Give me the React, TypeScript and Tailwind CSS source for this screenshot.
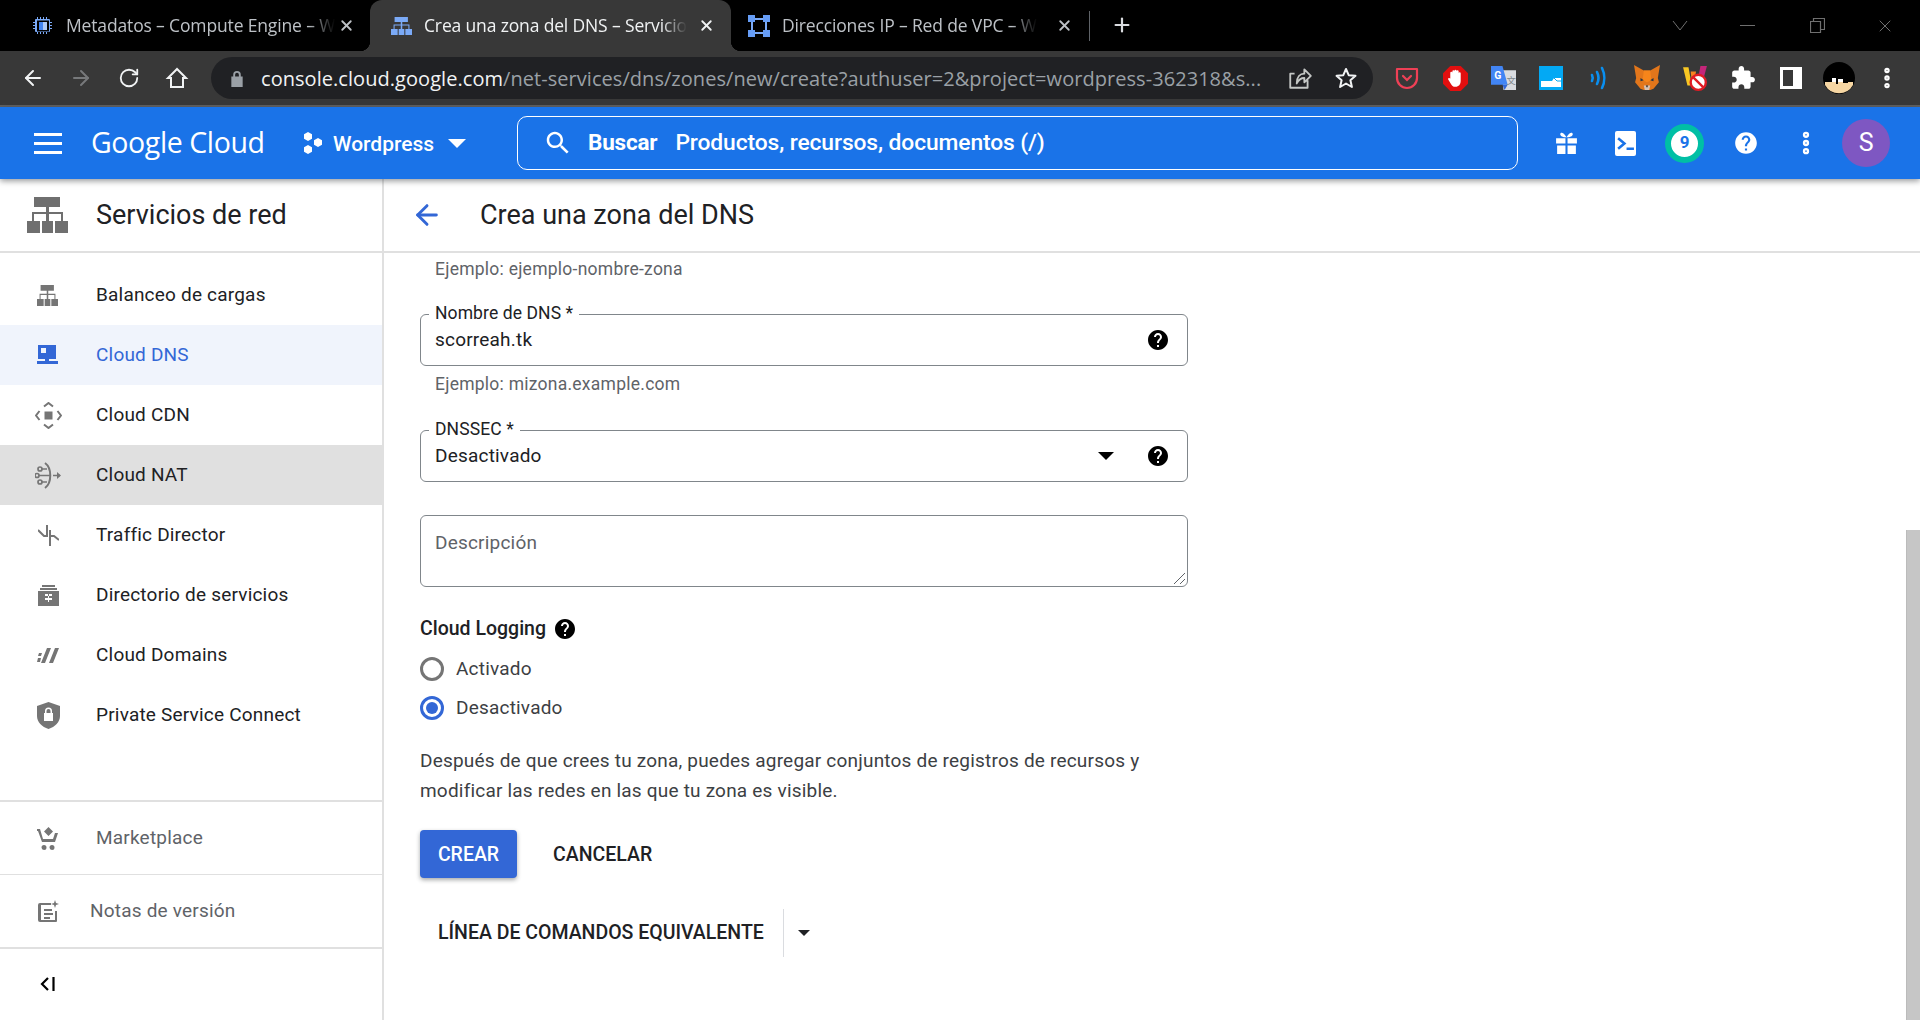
import type { ReactNode } from "react";
import { ArrowLeft, ArrowRight, Ellipsis, Plus, RotateCw, X } from "lucide-react";

const HELP_PATH =
  "M12 2C6.48 2 2 6.48 2 12s4.48 10 10 10 10-4.48 10-10S17.52 2 12 2zm1 17h-2v-2h2v2zm2.07-7.75l-.9.92C13.45 12.9 13 13.5 13 15h-2v-.5c0-1.1.45-2.1 1.17-2.83l1.24-1.26c.37-.36.59-.86.59-1.41 0-1.1-.9-2-2-2s-2 .9-2 2H8c0-2.21 1.79-4 4-4s4 1.79 4 4c0 .88-.36 1.68-.93 2.25z";

function HelpIcon({ className = "h-6 w-6 text-black" }: { className?: string }) {
  return (
    <svg viewBox="0 0 24 24" className={className} fill="currentColor">
      <path d={HELP_PATH} />
    </svg>
  );
}

function NetworkIcon({ className }: { className?: string }) {
  return (
    <svg viewBox="0 0 41 36" preserveAspectRatio="none" className={className} fill="currentColor">
      <path d="M7 0h26v10H22v5h14v9h5v12H28V24h6v-7H22v7h4v12H15V24h4v-7H7v7h6v12H0V24h5v-9h14v-5H7z" />
    </svg>
  );
}

function ChipIcon() {
  return (
    <svg viewBox="0 0 24 24" className="h-[24px] w-[24px]" fill="#7baaf7">
      <path d="M6 3h1v2h2V3h1v2h2V3h1v2h2V3h1v2h2a1 1 0 0 1 1 1v2h2v1h-2v2h2v1h-2v2h2v1h-2v2a1 1 0 0 1-1 1h-2v2h-1v-2h-2v2h-1v-2h-2v2H9v-2H7v2H6v-2H5a1 1 0 0 1-1-1v-2H2v-1h2v-2H2v-1h2V9H2V8h2V6a1 1 0 0 1 1-1h1zm0 3.500v11h12v-11z" />
      <path d="M8 8h8v8H8z" fill="#4285f4" />
      <path d="M12 8h4v8h-4z" fill="#aecbfa" />
    </svg>
  );
}

function VpcIcon() {
  return (
    <svg viewBox="0 0 22 22" className="h-[22px] w-[22px]">
      <path d="M4 4h14v14H4z" fill="none" stroke="#7baaf7" strokeWidth="2" />
      <path d="M0 0h7v7H0zM15 0h7v7h-7zM0 15h7v7H0zM15 15h7v7h-7z" fill="#669df6" />
    </svg>
  );
}

function Tab({
  icon,
  title,
  active,
  className,
  closeClass,
}: {
  icon: ReactNode;
  title: string;
  active?: boolean;
  className: string;
  closeClass: string;
}) {
  return (
    <div
      className={`relative flex h-[51px] shrink-0 items-center ${className} ${
        active ? "rounded-t-[12px] bg-[#383838] text-[#f1f3f4]" : "text-[#bdc1c6]"
      }`}
    >
      {active && (
        <>
          <span className="absolute bottom-0 -left-[10px] h-[10px] w-[10px] bg-[radial-gradient(circle_at_0_0,#000_10px,#383838_10.5px)]" />
          <span className="absolute bottom-0 -right-[10px] h-[10px] w-[10px] bg-[radial-gradient(circle_at_100%_0,#000_10px,#383838_10.5px)]" />
        </>
      )}
      <span className="flex w-[24px] justify-center">{icon}</span>
      <span className="ml-[11px] whitespace-nowrap font-['Open_Sans'] text-[17.5px] tracking-[-0.15px] [mask-image:linear-gradient(to_right,#000_90%,transparent)]">
        {title}
      </span>
      <X className={`ml-auto h-[17px] w-[17px] ${closeClass}`} strokeWidth={2.6} />
    </div>
  );
}

function TabStrip() {
  return (
    <div className="flex h-[51px] shrink-0 bg-black">
      <div className="flex pl-[14px] pr-0">
        <Tab className="w-[356px] pl-[17px]" closeClass="mr-[15px]" title="Metadatos – Compute Engine – W" icon={<ChipIcon />} />
        <Tab
          active
          className="w-[361px] pl-[19px]"
          closeClass="mr-[16px]"
          title="Crea una zona del DNS – Servicio"
          icon={<NetworkIcon className="h-[18px] w-[21px] text-[#7baaf7]" />}
        />
        <Tab className="w-[359px] pl-[16px]" closeClass="mr-[17px]" title="Direcciones IP – Red de VPC – W" icon={<VpcIcon />} />
      </div>
      <div className="ml-[-1px] mt-[11px] h-[30px] w-px bg-[#5f6368]" />
      <Plus className="ml-[21px] mt-[14px] h-[22px] w-[22px] text-[#dadce0]" strokeWidth={2.4} />
      <div className="ml-auto flex items-center text-[#6f6f6f]">
        <svg viewBox="0 0 16 10" className="mr-[52px] h-[10px] w-[16px]" fill="none" stroke="currentColor">
          <path d="M1 0l7 9 7-9" />
        </svg>
        <div className="mr-[55px] h-px w-[15px] bg-current" />
        <svg viewBox="0 0 15 15" className="mr-[50px] h-[15px] w-[15px]" fill="none" stroke="currentColor" strokeWidth="1.2">
          <path d="M.5 3.500h10v11H.5zM3.500 3.500v-3h11v11h-4" />
        </svg>
        <X className="mr-[25px] h-[20px] w-[20px]" strokeWidth={1.2} />
      </div>
    </div>
  );
}

function HomeIcon() {
  return (
    <svg viewBox="0 0 24 24" className="h-[24px] w-[24px]" fill="none" stroke="#f1f3f4" strokeWidth="2">
      <path d="M12 3 3 12h3v9h12v-9h3z" strokeLinejoin="miter" />
    </svg>
  );
}

function ExtSlot({ children }: { children: ReactNode }) {
  return <div className="flex w-[48px] items-center justify-center">{children}</div>;
}

function Extensions() {
  return (
    <div className="ml-[10px] flex h-[42px]">
      <ExtSlot>
        <svg viewBox="0 0 24 24" className="h-[24px] w-[24px]" fill="none" stroke="#ef4056" strokeWidth="2.2">
          <path d="M2 3h20v9a10 10 0 0 1-20 0z" strokeLinejoin="round" />
          <path d="M8 10l4 4 4-4" strokeLinecap="round" />
        </svg>
      </ExtSlot>
      <ExtSlot>
        <svg viewBox="0 0 24 24" className="h-[25px] w-[25px]">
          <path d="M7 0h10l7 7v10l-7 7H7l-7-7V7z" fill="#e20f0f" />
          <path d="M7 12V6.500a1 1 0 0 1 2 0V5a1 1 0 0 1 2 0V4.500a1 1 0 0 1 2 0V5a1 1 0 0 1 2 0v2a1 1 0 0 1 2 0v7c0 4-2 6-5 6-2.500 0-3.500-1-4.500-3L5 13c-.5-1.500 1-2 2-1z" fill="#fff" />
        </svg>
      </ExtSlot>
      <ExtSlot>
        <svg viewBox="0 0 24 24" className="h-[25px] w-[25px]">
          <path d="M10 4h14v19H12z" fill="#dadce0" />
          <path d="M0 0h11l5 18H0z" fill="#4285f4" />
          <path d="M11 18h5l-3 5z" fill="#3367d6" />
          <text x="3" y="12" fontSize="10" fontWeight="700" fill="#fff" fontFamily="Roboto, sans-serif">G</text>
          <text x="15" y="17" fontSize="9" fill="#80868b" fontFamily="Noto Sans CJK SC, sans-serif">文</text>
        </svg>
      </ExtSlot>
      <ExtSlot>
        <svg viewBox="0 0 24 24" className="h-[24px] w-[24px]">
          <path d="M0 0h24v24H0z" fill="#03a9f4" />
          <path d="M2 15h11l2-3h7v9H2z" fill="#fff" />
          <path d="M15 12l3 3h4" fill="none" stroke="#03a9f4" strokeWidth="1" />
        </svg>
      </ExtSlot>
      <ExtSlot>
        <svg viewBox="0 0 24 24" className="h-[24px] w-[24px]" fill="none" stroke="#0a8ff0" strokeWidth="2.6" strokeLinecap="round">
          <path d="M5 9c1 2 1 4 0 6M10 6c2 4 2 8 0 12M15 2c3 6 3 14 0 20" />
        </svg>
      </ExtSlot>
      <ExtSlot>
        <svg viewBox="0 0 24 24" className="h-[26px] w-[26px]">
          <path d="M0 0l9 5h6l9-5-2 12 1 4-5 6-3 1h-6l-3-1-5-6 1-4z" fill="#e2761b" />
          <path d="M9 5h6l1 9-4 2-4-2z" fill="#f6851b" />
          <path d="M9 19h6l-1 4h-4z" fill="#d7c1b3" />
          <path d="M6 12l3 2-3 1zM18 12l-3 2 3 1z" fill="#233447" />
          <path d="M11 19h2l-1 2z" fill="#161616" />
        </svg>
      </ExtSlot>
      <ExtSlot>
        <svg viewBox="0 0 24 24" className="h-[28px] w-[26px]">
          <path d="M1 2h5l3 17H5z" fill="#f9c823" />
          <path d="M8 6h5l-2 9H9z" fill="#f58220" />
          <path d="M17 1h6l-3 11h-5z" fill="#c4267a" />
          <circle cx="15" cy="16" r="7" fill="#fff" stroke="#e01b24" strokeWidth="2.2" />
          <path d="M10.500 11.500l9 9" stroke="#e01b24" strokeWidth="2.2" />
        </svg>
      </ExtSlot>
      <ExtSlot>
        <svg viewBox="0 0 24 24" className="h-[26px] w-[26px]" fill="#fff">
          <path d="M20.500 11H19V7c0-1.100-.9-2-2-2h-4V3.500C13 2.120 11.880 1 10.500 1S8 2.120 8 3.500V5H4c-1.100 0-1.990.9-1.990 2v3.800H3.500c1.490 0 2.700 1.210 2.700 2.700s-1.210 2.700-2.700 2.700H2V20c0 1.100.9 2 2 2h3.800v-1.500c0-1.490 1.210-2.700 2.700-2.700 1.490 0 2.700 1.210 2.700 2.700V22H17c1.100 0 2-.9 2-2v-4h1.500c1.380 0 2.500-1.120 2.500-2.500S21.880 11 20.500 11z" />
        </svg>
      </ExtSlot>
      <ExtSlot>
        <div className="flex h-[22px] w-[22px] justify-end border-[3px] border-white">
          <span className="w-[6px] bg-white" />
        </div>
      </ExtSlot>
      <ExtSlot>
        <svg viewBox="0 0 32 32" className="h-[32px] w-[32px]">
          <circle cx="16" cy="16" r="16" fill="#000" />
          <path d="M2 23a16 16 0 0 0 28 0v-3H2z" fill="#f6d6a3" />
          <path d="M6 20v-5h3v5zM13 22V13h2v9zM20 21v-7h5v7z" fill="#000" />
          <path d="M9 16h4v4H9zM15 17h5v3h-5z" fill="#fff" />
        </svg>
      </ExtSlot>
      <ExtSlot>
        <Ellipsis className="h-[26px] w-[26px] rotate-90 text-white" strokeWidth={3} />
      </ExtSlot>
    </div>
  );
}

function BrowserBar() {
  return (
    <div className="flex h-[56px] shrink-0 items-start border-b-2 border-[#5f5f5f] bg-[#383838] pt-[6px]">
      <div className="ml-[9px] flex h-[42px]">
        <div className="flex w-[48px] items-center justify-center"><ArrowLeft className="h-[24px] w-[24px] text-[#f1f3f4]" strokeWidth={2} /></div>
        <div className="flex w-[48px] items-center justify-center"><ArrowRight className="h-[24px] w-[24px] text-[#77797b]" strokeWidth={2} /></div>
        <div className="flex w-[48px] items-center justify-center"><RotateCw className="h-[22px] w-[22px] text-[#f1f3f4]" strokeWidth={2} /></div>
        <div className="flex w-[48px] items-center justify-center"><HomeIcon /></div>
      </div>
      <div className="ml-[10px] flex h-[42px] w-[1162px] items-center rounded-full bg-[#202124] pl-[19px]">
        <svg viewBox="0 0 14 18" className="h-[17px] w-[14px]" fill="#9aa0a6">
          <path d="M3 7V5a4 4 0 0 1 8 0v2h2v11H1V7zm2 0h4V5a2 2 0 0 0-4 0z" />
        </svg>
        <span className="ml-[17px] w-[1002px] whitespace-nowrap pt-[1px] font-['Open_Sans'] text-[20px] tracking-[0.05px] text-[#9aa0a6]">
          <span className="text-[#f1f3f4]">console.cloud.google.com</span>/net-services/dns/zones/new/create?authuser=2&amp;project=wordpress-362318&amp;s...
        </span>
        <svg viewBox="0 0 24 24" className="ml-[24px] h-[26px] w-[26px]" fill="none" stroke="#c4c7c5" strokeWidth="1.7">
          <path d="M19 14v7H3V8h4M9 17c0-6 3-9 7-9V4l6 6-6 6v-4c-3 0-5 1-7 5z" strokeLinejoin="round" />
        </svg>
        <svg viewBox="0 0 24 24" className="ml-[21px] h-[24px] w-[24px]" fill="none" stroke="#f1f3f4" strokeWidth="2">
          <path d="M12 3l2.700 6.200 6.800.6-5.100 4.500 1.500 6.700-5.900-3.500-5.900 3.500 1.500-6.700L2.500 9.800l6.800-.6z" strokeLinejoin="round" />
        </svg>
      </div>
      <Extensions />
    </div>
  );
}

function GcpHeader() {
  return (
    <header className="relative z-10 flex h-[72px] shrink-0 items-center bg-[#1a73e8] text-white shadow-[0_2px_6px_rgba(60,64,67,0.55)]">
      <div className="ml-[34px] flex w-[28px] flex-col gap-[6px]">
        <span className="h-[3px] bg-white" />
        <span className="h-[3px] bg-white" />
        <span className="h-[3px] bg-white" />
      </div>
      <span className="ml-[29px] w-[177px] whitespace-nowrap pb-[2px] font-['Open_Sans'] text-[28.5px] leading-none tracking-[-0.4px]">
        Google Cloud
      </span>
      <svg viewBox="0 0 20 22" className="ml-[35px] h-[22px] w-[20px]" fill="#fff">
        <path d="M5 0l4 2.300v4.400L5 9 1 6.700V2.300zM15 6l4 2.300v4.400L15 15l-4-2.300V8.300zM5 13l4 2.300v4.400L5 22l-4-2.300v-4.400z" />
      </svg>
      <span className="ml-[10px] pt-[3px] font-[Roboto] text-[21px] font-medium">Wordpress</span>
      <span className="ml-[14px] h-0 w-0 border-x-[9px] border-t-[9px] border-x-transparent border-t-white" />
      <div className="ml-[51px] flex h-[54px] w-[1001px] items-center rounded-[10px] border border-white pl-[25px] font-[Roboto]">
        <svg viewBox="0 0 24 24" className="h-[30px] w-[30px]" fill="#fff">
          <path d="M15.500 14h-.79l-.28-.27C15.410 12.590 16 11.110 16 9.500 16 5.910 13.090 3 9.500 3S3 5.910 3 9.500 5.910 16 9.500 16c1.610 0 3.090-.59 4.230-1.570l.27.28v.79l5 4.990L20.490 19l-4.990-5zm-6 0C7.010 14 5 11.990 5 9.500S7.010 5 9.500 5 14 7.010 14 9.500 11.990 14 9.500 14z" />
        </svg>
        <span className="ml-[15px] text-[22.5px] font-bold tracking-[-0.2px]">Buscar</span>
        <span className="ml-[18px] text-[22.8px] font-medium tracking-[-0.1px]">Productos, recursos, documentos (/)</span>
      </div>
      <div className="ml-[18px] flex items-center">
        <div className="flex w-[60px] justify-center">
          <svg viewBox="0 0 24 24" className="h-[25px] w-[25px]" fill="#fff">
            <path d="M2 7h9v5H2zM13 7h9v5h-9zM3 14h8v8H3zM13 14h8v8h-8z" />
            <path d="M12 6C9 6 6 5 6 3c0-2 3-2.500 6 3 3-5.500 6-5 6-3 0 2-3 3-6 3z" />
          </svg>
        </div>
        <div className="flex w-[58px] justify-center">
          <div className="flex h-[25px] w-[21px] items-center justify-center rounded-[2px] bg-white">
            <svg viewBox="0 0 18 18" className="h-[19px] w-[19px]" fill="none" stroke="#1a73e8" strokeWidth="2.400">
              <path d="M2 4l6 5-6 5M10 14h7" />
            </svg>
          </div>
        </div>
        <div className="ml-[11px] mr-[11px] flex h-[39px] w-[39px] items-center justify-center rounded-full border-[6px] border-[#00bfa5] bg-white font-[Roboto] text-[17px] font-bold text-[#1a73e8]">
          9
        </div>
        <div className="flex w-[62px] justify-center">
          <HelpIcon className="h-[26px] w-[26px] text-white" />
        </div>
        <div className="flex w-[58px] justify-center">
          <Ellipsis className="h-[28px] w-[28px] rotate-90" strokeWidth={3.4} />
        </div>
        <div className="ml-[7px] flex h-[48px] w-[48px] items-center justify-center rounded-full bg-[#7e57c2] font-[Roboto] text-[25px]">
          S
        </div>
      </div>
    </header>
  );
}

const NAV_ICONS: Record<string, ReactNode> = {
  balanceo: <NetworkIcon className="h-[21px] w-[21px]" />,
  dns: (
    <svg viewBox="0 0 21 20" className="h-[20px] w-[21px]" fill="currentColor">
      <path d="M1 0h18v14h-7v2h9v3H0v-3h8v-2H1zm3 3v5h5V3z" fillRule="evenodd" />
    </svg>
  ),
  cdn: (
    <svg viewBox="0 0 27 27" className="ml-[1px] h-[27px] w-[27px]" fill="none" stroke="currentColor" strokeWidth="2">
      <path d="M9.500 9.500h8v8h-8z" fill="currentColor" stroke="none" />
      <path d="M9 4.500l4.500-3.500 4.500 3.500M9 22.500l4.500 3.500 4.500-3.500M4.500 9L1 13.500 4.500 18M22.500 9l3.500 4.500-3.500 4.500" />
    </svg>
  ),
  nat: (
    <svg viewBox="0 0 27 27" className="ml-[1px] h-[27px] w-[27px]" fill="none" stroke="currentColor" strokeWidth="1.700">
      <path d="M10 1c7 5 7 20 0 25" strokeWidth="2" />
      <path d="M0 13.500h15M4 7h8M4 20h8M18 13.500h7" />
      <circle cx="5" cy="7" r="2" fill="#e0e0e0" />
      <circle cx="2" cy="13.500" r="2" fill="#e0e0e0" />
      <circle cx="5" cy="20" r="2" fill="#e0e0e0" />
      <path d="M22 10l4 3.500-4 3.500z" fill="currentColor" stroke="none" />
    </svg>
  ),
  traffic: (
    <svg viewBox="0 0 21 21" className="ml-[1px] h-[21px] w-[21px]" fill="none" stroke="currentColor" strokeWidth="2">
      <path d="M9 0v12M12 5v16M0 5l6 6h3M21 15l-5-4h-4" />
    </svg>
  ),
  directorio: (
    <svg viewBox="0 0 21 21" className="ml-[1px] h-[21px] w-[21px]" fill="currentColor">
      <path d="M4 0h13v2H4zM2 3h17v2H2zM0 6h21v15H0zm7 3v2h3v2H7v2h3v2h1v-2h3v-2h-3v-2h3V9h-3v2h-1V9z" fillRule="evenodd" />
    </svg>
  ),
  domains: (
    <svg viewBox="0 0 22 15" className="ml-[1px] h-[15px] w-[22px]" fill="currentColor">
      <path d="M2 5h3L4 8H1zM1 10h3l-1 4H0zM10 0h4L8 15H4zM18 0h4l-6 15h-4z" />
    </svg>
  ),
  psc: (
    <svg viewBox="0 0 23 27" className="ml-[1px] h-[27px] w-[23px]" fill="currentColor">
      <path d="M11.500 0L23 4v10c0 6-5 11-11.500 13C5 25 0 20 0 14V4zM8 9v2H7v8h9v-8h-1V9a3.500 3.500 0 0 0-7 0zm1.500 0a2 2 0 0 1 4 0v2h-4z" fillRule="evenodd" />
    </svg>
  ),
};

const NAV_ITEMS = [
  { key: "balanceo", label: "Balanceo de cargas" },
  { key: "dns", label: "Cloud DNS", active: true },
  { key: "cdn", label: "Cloud CDN" },
  { key: "nat", label: "Cloud NAT", hover: true },
  { key: "traffic", label: "Traffic Director" },
  { key: "directorio", label: "Directorio de servicios" },
  { key: "domains", label: "Cloud Domains" },
  { key: "psc", label: "Private Service Connect" },
];

function Sidebar() {
  return (
    <aside className="flex w-[384px] shrink-0 flex-col border-r-2 border-[#e0e0e0] font-[Roboto]">
      <div className="flex h-[74px] shrink-0 items-center border-b-2 border-[#e0e0e0]">
        <NetworkIcon className="ml-[27px] h-[36px] w-[41px] text-[#6f6f6f]" />
        <span className="ml-[28px] text-[27px] text-[#202124]">Servicios de red</span>
      </div>
      <nav className="flex h-[549px] shrink-0 flex-col border-b-2 border-[#e0e0e0] pt-[12px]">
        {NAV_ITEMS.map((item) => (
          <div
            key={item.key}
            className={`flex h-[60px] items-center text-[19px] tracking-[0.2px] ${
              item.active ? "bg-[#f0f4fc] text-[#3367d6]" : item.hover ? "bg-[#e0e0e0] text-[#202124]" : "text-[#202124]"
            }`}
          >
            <span className={`flex w-[96px] justify-center pr-[1px] ${item.active ? "text-[#3367d6]" : "text-[#757575]"}`}>
              {NAV_ICONS[item.key]}
            </span>
            <span className="pt-[1px]">{item.label}</span>
          </div>
        ))}
      </nav>
      <div className="flex h-[73px] shrink-0 items-center border-b border-[#e0e0e0] text-[19px] tracking-[0.2px] text-[#5f6368]">
        <span className="flex w-[96px] justify-center text-[#757575]">
          <svg viewBox="0 0 22 23" className="h-[23px] w-[22px]" fill="currentColor">
            <path d="M11.500 0L16 4.500 11.500 9 7 4.500zM0 2h3l3 10h10l2-6h3l-3 9H5L1 4H0zM7 18a2.500 2.500 0 1 1 0 5 2.500 2.500 0 0 1 0-5zM15 18a2.500 2.500 0 1 1 0 5 2.500 2.500 0 0 1 0-5z" />
          </svg>
        </span>
        <span className="pt-[1px]">Marketplace</span>
      </div>
      <div className="flex h-[74px] shrink-0 items-center border-b-2 border-[#e0e0e0] text-[19px] tracking-[0.2px] text-[#5f6368]">
        <span className="flex w-[90px] justify-center pl-[6px] text-[#757575]">
          <svg viewBox="0 0 21 23" className="h-[23px] w-[21px]" fill="currentColor">
            <path d="M2 3h11v2H3v15h14v-9h2v10a1 1 0 0 1-1 1H2a2 2 0 0 1-2-2V5a2 2 0 0 1 2-2zM6 9h8v2H6zM6 13h9v2H6zM6 17h6v2H6zM17 0l1 3 3 1-3 1-1 3-1-3-3-1 3-1z" />
          </svg>
        </span>
        <span className="pt-[1px]">Notas de versión</span>
      </div>
      <div className="flex h-[70px] shrink-0 items-center pl-[40px]">
        <svg viewBox="0 0 15 14" className="h-[14px] w-[15px]" fill="none" stroke="#000" strokeWidth="2.200">
          <path d="M8 1L2 7l6 6M13.500 0v14" />
        </svg>
      </div>
    </aside>
  );
}

function Field({
  label,
  value,
  select,
}: {
  label: string;
  value: string;
  select?: boolean;
}) {
  return (
    <div className="relative flex h-[52px] w-[768px] items-center rounded-[6px] border border-[#80868b] pl-[14px] pr-[17px] text-[19px] tracking-[0.2px] text-[#202124]">
      <span className="absolute -top-[12px] left-[8px] bg-white px-[6px] text-[17.5px] leading-[20px] tracking-[0.1px] text-[#202124]">{label}</span>
      <span className="flex-1">{value}</span>
      {select && <span className="mr-[32px] h-0 w-0 border-x-[8px] border-t-[8px] border-x-transparent border-t-black" />}
      <HelpIcon />
    </div>
  );
}

function Radio({ checked, label }: { checked?: boolean; label: string }) {
  return (
    <div className="flex h-[24px] items-center text-[19px] tracking-[0.2px] text-[#3c4043]">
      {checked ? (
        <span className="flex h-[24px] w-[24px] items-center justify-center rounded-full border-[3px] border-[#3367d6]">
          <span className="h-[12px] w-[12px] rounded-full bg-[#3367d6]" />
        </span>
      ) : (
        <span className="h-[24px] w-[24px] rounded-full border-[3px] border-[#757575]" />
      )}
      <span className="ml-[12px]">{label}</span>
    </div>
  );
}

function CreateForm() {
  return (
    <div className="min-w-0 flex-1 pl-[36px] font-[Roboto]">
      <p className="mt-[4px] pl-[15px] text-[17.5px] leading-[24px] tracking-[0.25px] text-[#5f6368]">Ejemplo: ejemplo-nombre-zona</p>
      <div className="mt-[33px]">
        <Field label="Nombre de DNS *" value="scorreah.tk" />
      </div>
      <p className="mt-[6px] pl-[15px] text-[17.5px] leading-[24px] tracking-[0.25px] text-[#5f6368]">Ejemplo: mizona.example.com</p>
      <div className="mt-[34px]">
        <Field select label="DNSSEC *" value="Desactivado" />
      </div>
      <div className="relative mt-[33px] h-[72px] w-[768px] rounded-[6px] border border-[#80868b] pl-[14px] pt-[15px] text-[19px] leading-[24px] tracking-[0.2px] text-[#5f6368]">
        Descripción
        <svg viewBox="0 0 12 12" className="absolute bottom-[2px] right-[2px] h-[12px] w-[12px]" fill="none" stroke="#5f6368">
          <path d="M1 12L12 1M7 12l5-5" />
        </svg>
      </div>
      <div className="mt-[29px] flex h-[26px] items-center text-[19.5px] font-medium text-[#202124]">
        Cloud Logging
        <HelpIcon className="ml-[7px] h-[24px] w-[24px] text-black" />
      </div>
      <div className="mt-[15px] flex flex-col gap-[15px]">
        <Radio label="Activado" />
        <Radio checked label="Desactivado" />
      </div>
      <p className="mt-[26px] w-[740px] text-[19px] leading-[30px] tracking-[0.2px] text-[#3c4043]">
        Después de que crees tu zona, puedes agregar conjuntos de registros de recursos y modificar las redes en las que tu zona es visible.
      </p>
      <div className="mt-[24px] flex items-center">
        <button className="h-[48px] w-[97px] rounded-[4px] bg-[#3367d6] pt-[1px] text-[19.5px] font-medium text-white shadow-[0_2px_4px_rgba(60,64,67,0.45)]">
          CREAR
        </button>
        <span className="ml-[36px] pt-[1px] text-[19.5px] font-medium text-[#202124]">CANCELAR</span>
      </div>
      <div className="mt-[31px] flex h-[48px] items-center">
        <span className="ml-[18px] w-[345px] whitespace-nowrap text-[19.5px] font-medium text-[#202124]">LÍNEA DE COMANDOS EQUIVALENTE</span>
        <span className="h-[48px] w-px bg-[#dadce0]" />
        <span className="ml-[14px] h-0 w-0 border-x-[6px] border-t-[6px] border-x-transparent border-t-[#202124]" />
      </div>
    </div>
  );
}

function MainArea() {
  return (
    <main className="flex min-w-0 flex-1 flex-col">
      <div className="flex h-[74px] shrink-0 items-center border-b-2 border-[#e0e0e0] font-[Roboto]">
        <ArrowLeft className="ml-[27px] h-[32px] w-[32px] text-[#3367d6]" strokeWidth={2.2} />
        <h1 className="ml-[37px] text-[27px] text-[#202124]">Crea una zona del DNS</h1>
      </div>
      <div className="flex min-h-0 flex-1">
        <CreateForm />
        <div className="flex w-[14px] shrink-0 flex-col justify-end">
          <div className="h-[490px] border-l border-[#bbbbbb] bg-[#c6c6c6]" />
        </div>
      </div>
    </main>
  );
}

export default function App() {
  return (
    <div className="flex h-[1020px] w-[1920px] flex-col overflow-hidden bg-white">
      <TabStrip />
      <BrowserBar />
      <GcpHeader />
      <div className="flex min-h-0 flex-1">
        <Sidebar />
        <MainArea />
      </div>
    </div>
  );
}
